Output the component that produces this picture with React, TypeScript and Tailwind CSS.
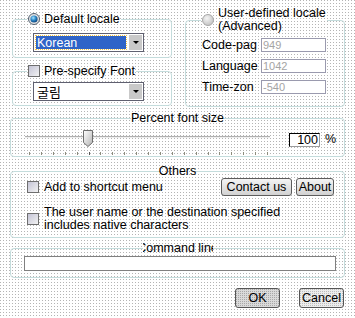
import React from "react";

const Radio = ({ on }: { on?: boolean }) =>
  on ? (
    <svg width="12" height="12" viewBox="0 0 12 12" className="shrink-0">
      <defs>
        <radialGradient id="rOn" cx="0.4" cy="0.35" r="0.7">
          <stop offset="0" stopColor="#a6e4ff" />
          <stop offset="0.5" stopColor="#2a86c6" />
          <stop offset="1" stopColor="#0a3c74" />
        </radialGradient>
      </defs>
      <circle cx="6" cy="6" r="5.5" fill="#e4e4e4" stroke="#4f5f70" />
      <circle cx="6" cy="6" r="3.6" fill="url(#rOn)" />
    </svg>
  ) : (
    <svg width="12" height="12" viewBox="0 0 12 12" className="shrink-0">
      <defs>
        <radialGradient id="rOff" cx="0.4" cy="0.35" r="0.75">
          <stop offset="0" stopColor="#f4f4f4" />
          <stop offset="1" stopColor="#bdbdbd" />
        </radialGradient>
      </defs>
      <circle cx="6" cy="6" r="5.5" fill="url(#rOff)" stroke="#a9a9a9" />
    </svg>
  );

const Check = () => (
  <span className="w-[12px] h-[12px] shrink-0 border border-[#6e6e6e] bg-[linear-gradient(135deg,#c4c4d6,#f2f2f2)]" />
);

const Combo = ({ children, selected }: { children: React.ReactNode; selected?: boolean }) => (
  <div className="ml-[6px] w-[111px] h-[19px] border border-[#5f6070] bg-white flex items-center p-[1px] gap-[3px]">
    <div
      className={
        selected
          ? "flex-1 h-[13px] ml-[1px] bg-[#2f64c8] text-white outline-1 outline-dotted outline-[#f0c040] flex items-center pl-[1px]"
          : "flex-1 h-[13px] ml-[1px] flex items-center pl-[1px] font-['Noto_Sans_CJK_KR','Liberation_Sans',sans-serif] text-[13px]"
      }
    >
      {children}
    </div>
    <div className="w-[13px] h-[15px] bg-[#c9c9c9] flex items-center justify-center">
      <div className="w-0 h-0 border-x-[3px] border-t-[3px] border-x-transparent border-t-black" />
    </div>
  </div>
);

const Field = ({ label, value }: { label: string; value: string }) => (
  <div className="flex items-center h-[14px]">
    <span className="w-[59px] ml-[1px] whitespace-nowrap">{label}</span>
    <div className="w-[65px] h-[14px] border border-[#9a9aae] bg-white text-[#a4a4a4] text-[11px] leading-[12px] pl-[1px]">
      {value}
    </div>
  </div>
);

const ticks = Array.from({ length: 21 }, (_, i) => 4 + i * 11.9);

export default function App() {
  return (
    <div className="w-[355px] h-[318px] overflow-hidden bg-[conic-gradient(from_270deg_at_1px_1px,#b4b4b4_25%,#fff_0)] bg-[length:3px_3px] font-['Liberation_Sans',Arial,sans-serif] text-[12.5px] leading-[12px] text-black px-[10px]">
      {/* locale + font */}
      <div className="flex gap-[13px] pl-[2px]">
        <div className="w-[160px] flex flex-col">
          <fieldset className="mt-[12px] border border-[#c4dcdc] rounded-[4px] pl-[14px] pb-[5px]">
            <legend className="px-[1px] h-[14px] flex items-center gap-[4px]">
              <Radio on />
              <span>Default locale</span>
            </legend>
            <div className="mt-[7px]">
              <Combo selected>Korean</Combo>
            </div>
          </fieldset>
          <fieldset className="mt-[6px] border border-[#c4dcdc] rounded-[4px] pl-[14px] pb-[4px]">
            <legend className="px-[1px] h-[14px] flex items-center gap-[4px]">
              <Check />
              <span>Pre-specify Font</span>
            </legend>
            <div className="mt-[4px]">
              <Combo>굴림</Combo>
            </div>
          </fieldset>
        </div>

        <fieldset className="mt-[7px] w-[160px] border border-[#c4dcdc] rounded-[4px] pl-[15px] pb-[12px]">
          <legend className="px-[1px] flex items-center gap-[4px]">
            <Radio />
            <span className="leading-[13px]">
              User-defined locale
              <br />
              (Advanced)
            </span>
          </legend>
          <div className="mt-[5px] flex flex-col gap-[7px]">
            <Field label="Code-pag" value="949" />
            <Field label="Language" value="1042" />
            <Field label="Time-zon" value="-540" />
          </div>
        </fieldset>
      </div>

      {/* percent font size */}
      <fieldset className="mt-[4px] border border-[#c4dcdc] rounded-[4px]">
        <legend className="mx-auto h-[14px] flex items-center">Percent font size</legend>
        <div className="flex items-start mt-[2px] pl-[14px]">
          <svg width="245" height="29" viewBox="0 0 245 29" className="shrink-0">
            <defs>
              <linearGradient id="th" x1="0" y1="0" x2="1" y2="1">
                <stop offset="0" stopColor="#ffffff" />
                <stop offset="1" stopColor="#b4b4b4" />
              </linearGradient>
            </defs>
            <rect x="0" y="9" width="245" height="1" fill="#b0b0b0" />
            <rect x="0" y="10" width="245" height="1" fill="#eeeeee" />
            {ticks.map((x, i) => (
              <rect key={i} x={Math.round(x)} y="25" width="1" height="3" fill={i === 5 ? "#555" : "#8c8c7c"} />
            ))}
            <path d="M58.5 3.5 H67.5 V15.5 L63 19.5 L58.5 15.5 Z" fill="url(#th)" stroke="#6e6e6e" />
          </svg>
          <div className="ml-[19px] mt-[6px] w-[31px] h-[14px] bg-white border-t border-l border-black border-r border-b border-r-[#9c9c9c] border-b-[#9c9c9c] text-right pr-[1px] leading-[12px]">
            100
          </div>
          <span className="ml-[5px] mt-[6px]">%</span>
        </div>
      </fieldset>

      {/* others */}
      <fieldset className="mt-[7px] border border-[#c4dcdc] rounded-[4px] pb-[5px]">
        <legend className="mx-auto h-[14px] flex items-center">Others</legend>
        <div className="pl-[16px] pr-[10px]">
          <div className="flex items-center h-[18px]">
            <Check />
            <span className="ml-[5px]">Add to shortcut menu</span>
            <button className="ml-auto w-[71px] h-[18px] border border-[#5c5c5c] rounded-[3px] bg-[linear-gradient(#f4f4f4,#d2d2d2)]">
              Contact us
            </button>
            <button className="ml-[4px] w-[38px] h-[18px] border border-[#5c5c5c] rounded-[3px] bg-[linear-gradient(#f4f4f4,#d2d2d2)]">
              About
            </button>
          </div>
          <div className="flex items-center mt-[10px]">
            <Check />
            <span className="ml-[5px] leading-[13px]">
              The user name or the destination specified
              <br />
              includes native characters
            </span>
          </div>
        </div>
      </fieldset>

      {/* command line */}
      <fieldset className="mt-[3px] border border-[#c4dcdc] rounded-[4px] pb-[6px]">
        <legend className="mx-auto w-[70px] h-[14px] overflow-hidden flex items-center justify-center whitespace-nowrap">
          Command line
        </legend>
        <div className="mt-[1px] ml-[13px] w-[312px] h-[15px] bg-white border border-[#808080]" />
      </fieldset>

      {/* buttons */}
      <div className="flex justify-end gap-[19px] pr-[1px] mt-[10px]">
        <button className="w-[45px] h-[20px] border border-[#555] rounded-[3px] bg-[conic-gradient(from_270deg_at_1px_1px,#a8a8a8_25%,#dadada_0)] bg-[length:2px_2px]">
          OK
        </button>
        <button className="w-[45px] h-[20px] border border-[#555] rounded-[3px] bg-[conic-gradient(from_270deg_at_1px_1px,#bdbdbd_25%,#ececec_0)] bg-[length:2px_2px]">
          Cancel
        </button>
      </div>
    </div>
  );
}
